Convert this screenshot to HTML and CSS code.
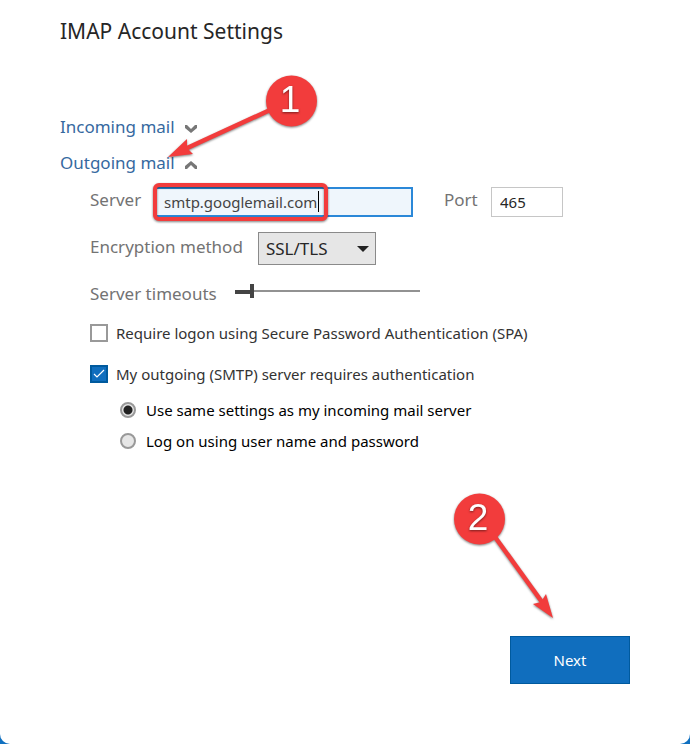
FILE: index.html
```html
<!DOCTYPE html>
<html lang="en">

<head>
    <meta charset="UTF-8">
    <meta name="viewport" content="width=device-width, initial-scale=1.0">
    <title>IMAP Account Settings</title>
    <link rel="stylesheet" href="styles.css">
</head>

<body>
    <main class="dialog">
        <h1>IMAP Account Settings</h1>
        <form class="settings">
            <button type="button" class="section-toggle" aria-expanded="false">
                Incoming mail
                <svg class="chevron" width="12" height="8" viewBox="0 0 12 8">
                    <path d="M0 0h2l4 4 4-4h2v3L6 8 0 3z" fill="#777" />
                </svg>
            </button>
            <button type="button" class="section-toggle" aria-expanded="true">
                Outgoing mail
                <svg class="chevron" width="12" height="8" viewBox="0 0 12 8">
                    <path d="M0 8h2l4-4 4 4h2V5L6 0 0 5z" fill="#777" />
                </svg>
            </button>

            <div class="outgoing">
                <div class="row server-row">
                    <label class="server-label" for="server">Server</label>
                    <input type="text" id="server" class="server" value="smtp.googlemail.com">
                    <label class="port-label" for="port">Port</label>
                    <input type="text" id="port" class="port" value="465">
                </div>
                <div class="row encryption-row">
                    <label for="encryption">Encryption method</label>
                    <div class="select-wrap">
                        <select id="encryption">
                            <option>SSL/TLS</option>
                            <option>STARTTLS</option>
                            <option>None</option>
                        </select>
                        <svg class="caret" width="12" height="6" viewBox="0 0 12 6">
                            <path d="M0 0h12L6 6z" fill="#222" />
                        </svg>
                    </div>
                </div>
                <div class="row timeout-row">
                    <label for="timeout">Server timeouts</label>
                    <input type="range" id="timeout" min="0" max="12" value="1">
                </div>

                <label class="option"><input type="checkbox">Require logon using Secure Password Authentication (SPA)</label>
                <label class="option auth"><input type="checkbox" checked>My outgoing (SMTP) server requires authentication</label>
                <div class="auth-options">
                    <label class="option"><input type="radio" name="auth" checked>Use same settings as my incoming mail server</label>
                    <label class="option"><input type="radio" name="auth">Log on using user name and password</label>
                </div>
            </div>

            <button type="submit" class="next">Next</button>
        </form>

        <!-- step markers -->
        <svg class="steps" width="640" height="640" viewBox="0 0 640 640">
            <path d="M318.500 191v21" stroke="#000" stroke-width="1" />
            <g class="marks">
                <rect x="155" y="185" width="171" height="34" rx="4" fill="none" stroke="#f23c3c" stroke-width="4" />
                <path d="M270 110L185 149" stroke="#f23c3c" stroke-width="4.500" />
                <path d="M168 157L187 139L187 148L193 154z" fill="#f23c3c" />
                <circle cx="291.500" cy="101" r="25.500" fill="#f23c3c" />
                <path d="M495 537L542 602" stroke="#f23c3c" stroke-width="4.500" />
                <path d="M553 618L546 594L541 602L533 604z" fill="#f23c3c" />
                <circle cx="479.500" cy="519" r="25.500" fill="#f23c3c" />
            </g>
            <g class="numbers">
                <text x="290" y="112">1</text>
                <text x="478" y="530">2</text>
            </g>
        </svg>
    </main>
</body>

</html>
```
FILE: styles.css
```css
* {
    box-sizing: border-box;
}

body {
    margin: 0;
    background-color: #1070c0;
    font-family: "Noto Sans", "Open Sans", sans-serif;
    color: #333;
}

.dialog {
    position: relative;
    display: flex;
    flex-direction: column;
    min-height: 100vh;
    padding: 17px 60px 60px;
    background-color: #fff;
    border-radius: 0 0 10px 10px;
}

h1 {
    margin: 0 0 64px;
    font-size: 21px;
    line-height: 28px;
    font-weight: 400;
    color: #262626;
}

.settings {
    display: flex;
    flex-direction: column;
    align-items: flex-start;
    flex: 1;
}

button,
input,
select {
    font-family: inherit;
    border-radius: 0;
}

.section-toggle {
    display: flex;
    align-items: center;
    gap: 10px;
    height: 36px;
    padding: 0 0 2px;
    border: none;
    background: none;
    font-size: 17px;
    color: #36699f;
    cursor: pointer;
}

.chevron {
    margin-top: 6px;
}

.outgoing {
    width: 100%;
    padding: 6px 0 24px 30px;
}

.row {
    display: flex;
    align-items: center;
    font-size: 17px;
    line-height: 24px;
    color: #737373;
}

.row label {
    padding-bottom: 4px;
    white-space: nowrap;
}

.server-row {
    height: 30px;
}

.server-label {
    width: 64px;
}

.server,
.port {
    height: 30px;
    padding: 0 8px;
    font-size: 15px;
}

.server {
    width: 259px;
    border: 2px solid #2b88d8;
    background-color: #eff6fc;
    color: #444;
}

.port-label {
    margin-left: 31px;
    width: 47px;
}

.port {
    width: 72px;
    border: 1px solid #c6c6c6;
    background-color: #fff;
    color: #262626;
}

.encryption-row {
    gap: 15px;
    margin-top: 15px;
}

.select-wrap {
    position: relative;
}

select {
    display: block;
    width: 118px;
    height: 33px;
    padding: 0 7px;
    appearance: none;
    border: 1px solid #8a8a8a;
    background-color: #e6e6e6;
    font-size: 17px;
    color: #262626;
}

.caret {
    position: absolute;
    right: 7px;
    top: 14px;
    pointer-events: none;
}

.timeout-row {
    gap: 18px;
    margin-top: 15px;
}

.timeout-row label {
    padding: 2px 0 0;
}

input[type="range"] {
    appearance: none;
    width: 185px;
    height: 14px;
    margin: 0 0 4px;
    background: linear-gradient(#444, #444) 0 6px / 16px 4px no-repeat,
        linear-gradient(#929292, #929292) 0 6px / 100% 2px no-repeat;
}

input[type="range"]::-webkit-slider-thumb {
    appearance: none;
    width: 4px;
    height: 14px;
    border: none;
    background-color: #444;
}

.option {
    display: flex;
    align-items: center;
    gap: 8px;
    height: 31px;
    font-size: 15px;
    white-space: nowrap;
}

.timeout-row + .option {
    margin-top: 11px;
}

.auth {
    margin-top: 10px;
}

input[type="checkbox"],
input[type="radio"] {
    appearance: none;
    flex: none;
    margin: 0;
    border: 2px solid #999;
}

input[type="checkbox"] {
    width: 18px;
    height: 18px;
    background-color: #fff;
}

input[type="checkbox"]:checked {
    border-color: #005a9e;
    background: #106ebe url("data:image/svg+xml,%3Csvg xmlns='http://www.w3.org/2000/svg' viewBox='0 0 14 14'%3E%3Cpath d='M2 7l3 3 7-7' fill='none' stroke='white' stroke-width='1.200'/%3E%3C/svg%3E");
}

input[type="radio"] {
    width: 16px;
    height: 16px;
    border-radius: 50%;
    background-color: #e6e6e6;
}

input[type="radio"]:checked {
    background: radial-gradient(circle, #222 4px, #e6e6e6 5px);
}

.auth-options {
    margin-top: 5px;
    padding-left: 30px;
    color: #000;
}

.auth-options .option {
    gap: 10px;
}

.next {
    width: 120px;
    height: 48px;
    margin-top: auto;
    align-self: flex-end;
    border: 1px solid #005a9e;
    background-color: #106ebe;
    font-size: 15px;
    color: #fff;
    cursor: pointer;
}

.next:hover {
    background-color: #005a9e;
}

.steps {
    position: absolute;
    left: 0;
    top: 0;
    pointer-events: none;
}

.marks {
    filter: drop-shadow(0 1px 1px rgba(0, 0, 0, 0.5));
}

.numbers {
    font-family: "Liberation Sans", Arial, sans-serif;
    font-size: 37px;
    text-anchor: middle;
    fill: #fff;
    filter: drop-shadow(0 1px 1px rgba(0, 0, 0, 0.5));
}
```
